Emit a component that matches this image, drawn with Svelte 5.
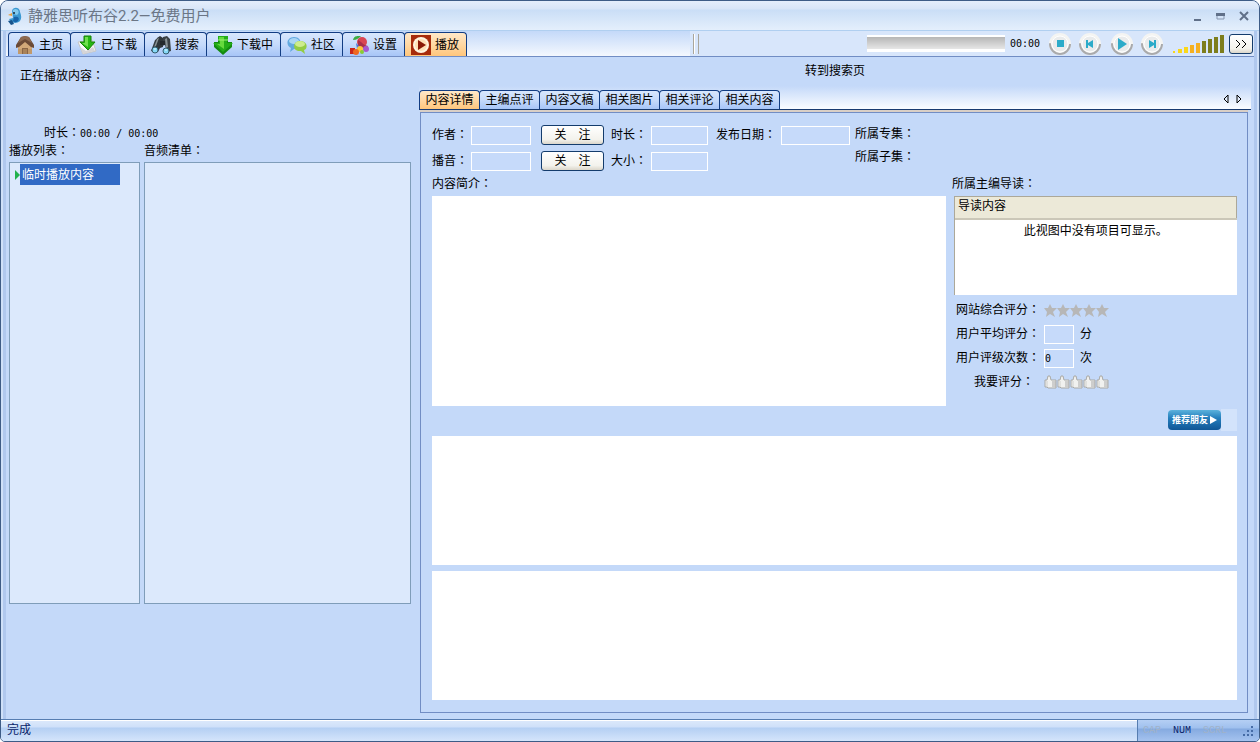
<script lang="ts">
    const mainTabs = [
        { id: "home", label: "主页" },
        { id: "done", label: "已下载" },
        { id: "search", label: "搜索" },
        { id: "down", label: "下载中" },
        { id: "chat", label: "社区" },
        { id: "settings", label: "设置" },
        { id: "play", label: "播放" },
    ];
    const detailTabs = ["内容详情", "主编点评", "内容文稿", "相关图片", "相关评论", "相关内容"];
    const bars = [2, 4, 6, 8, 10, 12, 14, 16, 18];

    let mainTab = $state("play");
    let detailTab = $state("内容详情");
    let volume = $state(4);
</script>

{#snippet colon()}<span class="colon">：</span>{/snippet}

{#snippet icon(id: string)}
    <svg class="icon" width="20" height="20" viewBox="0 0 20 20" aria-hidden="true">
        {#if id === "home"}
            <path d="M3 10 10 5l7 5v9H3z" fill="#d2a878" />
            <path d="M3 14h14v5H3z" fill="#c29a6c" />
            <path d="M1 10 6 2l4-1 4 1 5 8v3l-3-1-6-5-6 5-3 1z" fill="#6b4a36" />
            <path d="m6 2 4-1 4 1 3 6-7-4-7 4z" fill="#8d6a50" />
            <path d="M7 13h6v6H7z" fill="#8a6545" />
            <path d="M8 14h4v5H8z" fill="#a98258" />
        {:else if id === "done"}
            <path d="m1 7 14-2 4 11-13 3z" fill="#f8f8f8" stroke="#c5c5c5" />
            <path d="m3 12 3 7 12-3-2-4-7 4z" fill="#d5d5d8" />
            <path d="M7 1h7v6h4l-7 8-8-8h4z" fill="#27b814" stroke="#168209" />
            <path d="M8 2h3v10L5 8h3z" fill="#70e04d" />
        {:else if id === "search"}
            <path d="m4 5 3-2 2 1-3 9-3 4-3-1zM12 2l4-1 3 3 1 12-4 1-2-7-3 1z" fill="#3a4145" />
            <path d="m6 3 3-2 3 2v9l-3 1-2 4-6-1z" fill="#30373a" />
            <path d="m6 4 2-1-3 8-2 1zM14 4l2-1 1 9-2 1z" fill="#899295" />
            <path d="M9 6h5v4H9z" fill="#24292d" />
            <circle cx="4" cy="15" r="3" fill="#86d8f6" stroke="#325b6b" />
            <circle cx="15" cy="16" r="3" fill="#86d8f6" stroke="#325b6b" />
            <path d="M3 14h2M14 15h2" stroke="#e6fbff" />
        {:else if id === "down"}
            <path d="M5 1h10v6h4v5l-9 8-9-8V7h4z" fill="#148c10" />
            <path d="M5 1h10v4h-1v3h6l-10 9L0 8h6V5H5z" fill="#25ad18" />
            <path d="M6 2h5v12L4 9h3V5H6z" fill="#66da3d" />
            <path d="M5 5h10" stroke="#a1ef76" />
        {:else if id === "chat"}
            <path d="M7 2c9 0 9 12 0 12l-4 3 1-4C-2 10 0 2 7 2z" fill="#63a9df" />
            <ellipse cx="7" cy="6" rx="5" ry="3" fill="#a9d5f4" />
            <path d="M13 6c8 0 8 8 4 9l1 4-4-3C5 17 5 6 13 6z" fill="#93cc43" />
            <ellipse cx="13" cy="9" rx="5" ry="3" fill="#cdec8d" />
        {:else if id === "settings"}
            <path d="M4 5c1-5 5-4 8-4-2 2-4 4-8 4z" fill="#3cac43" />
            <circle cx="13" cy="7" r="5" fill="#d94653" />
            <path d="M9 5c4 2 5 5 10 6l-2 3-8-3z" fill="#a92f4b" />
            <path d="m7 8 5 5-4 1z" fill="#4679da" />
            <circle cx="17" cy="14" r="3" fill="#a658d0" />
            <path d="M1 13h5v6H1z" fill="#c9251c" />
            <circle cx="11" cy="14" r="3" fill="#ffc43a" />
            <circle cx="7" cy="17" r="3" fill="#ef6721" />
            <circle cx="13" cy="17" r="2" fill="#8acc36" />
        {:else}
            <path d="M0 0h20v20H0z" fill="#a72b0b" />
            <circle cx="10" cy="10" r="8" fill="#fff4df" />
            <circle cx="10" cy="10" r="6" fill="#ffe0b5" />
            <path d="m7 5 8 5-8 5z" fill="#8a1906" />
        {/if}
    </svg>
{/snippet}

{#snippet player(label: string, d: string)}
    <button class="round" aria-label={label}>
        <svg width="24" height="24" viewBox="0 0 24 24">
            <circle cx="12" cy="12" r="11" fill="#f4f4f2" />
            <circle cx="12" cy="12" r="10" fill="none" stroke="#a9aaac" stroke-width="2" stroke-dasharray="32 31" />
            <circle cx="12" cy="12" r="8" fill="#e9ebec" stroke="#fff" />
            <path {d} fill="#2cabc9" />
        </svg>
    </button>
{/snippet}

<div class="window">
    <header class="titlebar">
        <svg width="16" height="18" viewBox="0 0 16 18" aria-hidden="true">
            <path d="M5 4c1-5 8-4 8 1 3 7 0 11-5 11l-4-1-2-3 4-1z" fill="#3b98d1" />
            <path d="M6 3c4-3 8 2 4 5L6 7z" fill="#82c9ed" />
            <path d="M5 6 1 8l4 1z" fill="#e9a03a" />
            <circle cx="7" cy="6" r="1" fill="#123" />
            <path d="M7 10c4-1 6 1 4 4-2 2-4 1-5 0z" fill="#1763a8" />
            <path d="m1 14 4-1 2 4-3 1z" fill="#17548c" />
        </svg>
        <h1>静雅思听布谷2.2—免费用户</h1>
        <div class="winbuttons">
            <button aria-label="最小化"><svg width="14" height="12"><path d="M3 9h7v2H3z" fill="#607089" /></svg></button>
            <button aria-label="最大化"><svg width="14" height="12"><path d="M3 4h7v5H3z" fill="none" stroke="#8897b0" /><path d="M2 3h9v3H2z" fill="#607089" /></svg></button>
            <button aria-label="关闭"><svg width="14" height="12"><path d="m3 2 8 8M11 2l-8 8" stroke="#607089" stroke-width="2" /></svg></button>
        </div>
    </header>

    <div class="frame">
        <div class="toolbar">
            <nav class="maintabs">
                {#each mainTabs as tab}
                    <button class="tab" class:active={mainTab === tab.id} onclick={() => (mainTab = tab.id)}>
                        {@render icon(tab.id)}
                        <span>{tab.label}</span>
                    </button>
                {/each}
            </nav>
            <div class="grip"></div>
            <div class="controls">
                <progress value="0" max="100" aria-label="播放进度"></progress>
                <span class="num">00:00</span>
                <div class="pair">
                    {@render player("停止", "M9 8h7v7H9z")}
                    {@render player("上一个", "M8 8h2v3l5-3v8l-5-3v3H8z")}
                </div>
                <div class="pair">
                    {@render player("播放", "m8 6 9 6-9 6z")}
                    {@render player("下一个", "M16 8h-2v3L9 8v8l5-3v3h2z")}
                </div>
                <label class="volume">
                    <svg width="52" height="20" aria-hidden="true">
                        {#each bars as h, i}
                            <rect x={i * 6 - (i ? 1 : 0)} y={19 - h} width={i ? 4 : 2} height={h} fill={i > volume ? "#7d7d1c" : i > 2 ? "#f5b021" : "#f9d71c"} />
                        {/each}
                    </svg>
                    <input type="range" min="0" max="8" bind:value={volume} aria-label="音量" />
                </label>
                <button class="push more" aria-label="更多">
                    <svg width="12" height="10"><path d="m1 1 4 4-4 4M7 1l4 4-4 4" fill="none" stroke="#000" /></svg>
                </button>
            </div>
        </div>

        <main>
            <section class="left">
                <p class="now">正在播放内容{@render colon()}</p>
                <p class="time">时长{@render colon()}<span class="num">00:00 / 00:00</span></p>
                <div class="lists">
                    <div class="listcol">
                        <h2>播放列表{@render colon()}</h2>
                        <ul>
                            <li>
                                <svg width="6" height="10"><path d="M1 0v10l5-5z" fill="#22b14c" /></svg>
                                <button class="selected">临时播放内容</button>
                            </li>
                        </ul>
                    </div>
                    <div class="listcol">
                        <h2>音频清单{@render colon()}</h2>
                        <ul></ul>
                    </div>
                </div>
            </section>

            <section class="right">
                <a class="goto" href="#search">转到搜索页</a>
                <nav class="detailtabs">
                    {#each detailTabs as tab}
                        <button class="tab" class:active={detailTab === tab} onclick={() => (detailTab = tab)}>{tab}</button>
                    {/each}
                    <div class="arrows">
                        <button aria-label="向左"><svg width="6" height="11"><path d="M5 1v8L1 5z" fill="none" stroke="#000" /></svg></button>
                        <button aria-label="向右"><svg width="6" height="11"><path d="M1 1v8l4-4z" fill="none" stroke="#000" /></svg></button>
                    </div>
                </nav>

                <div class="panel">
                    <div class="meta">
                        <div class="fields">
                            <label for="author">作者{@render colon()}</label>
                            <input id="author" type="text" />
                            <button class="push">关　注</button>
                            <label for="length">时长{@render colon()}</label>
                            <input id="length" type="text" />
                            <label for="date">发布日期{@render colon()}</label>
                            <input id="date" type="text" />
                            <label for="reader">播音{@render colon()}</label>
                            <input id="reader" type="text" />
                            <button class="push">关　注</button>
                            <label for="size">大小{@render colon()}</label>
                            <input id="size" type="text" />
                        </div>
                        <div class="belongs">
                            <span>所属专集{@render colon()}</span>
                            <span>所属子集{@render colon()}</span>
                        </div>
                    </div>

                    <div class="info">
                        <div class="intro">
                            <label for="intro">内容简介{@render colon()}</label>
                            <textarea id="intro" readonly></textarea>
                        </div>
                        <div class="side">
                            <h3>所属主编导读{@render colon()}</h3>
                            <div class="guide">
                                <table>
                                    <thead><tr><th>导读内容</th></tr></thead>
                                    <tbody><tr><td>此视图中没有项目可显示。</td></tr></tbody>
                                </table>
                            </div>
                            <div class="ratings">
                                <span>网站综合评分{@render colon()}</span>
                                <div class="row">
                                    <svg width="65" height="13" viewBox="0 0 65 13" role="img" aria-label="评分">
                                        {#each [0, 13, 26, 39, 52] as x}
                                            <path d="M{x + 6} 0l2 4h5l-4 4 2 5-5-3-4 3 1-5-3-4h4z" fill="#b7b7b7" />
                                        {/each}
                                    </svg>
                                </div>
                                <label for="avg">用户平均评分{@render colon()}</label>
                                <div class="row"><input id="avg" type="text" /><span>分</span></div>
                                <label for="count">用户评级次数{@render colon()}</label>
                                <div class="row"><input id="count" type="text" value="0" /><span>次</span></div>
                                <span class="mine">我要评分{@render colon()}</span>
                                <div class="thumbs">
                                    {#each [1, 2, 3, 4, 5] as n}
                                        <button aria-label="{n}分">
                                            <svg width="13" height="14" viewBox="0 0 13 14">
                                                <path d="M1 5h2l1-4h2l1 4h5v8H4l-1-1H1z" fill="#f1f1ef" stroke="#a9a9a6" />
                                                <path d="M8 7h4M8 9h4M8 11h4" stroke="#aaa" />
                                                <path d="M3 6v6" stroke="#cfcfcc" />
                                            </svg>
                                        </button>
                                    {/each}
                                </div>
                            </div>
                        </div>
                    </div>

                    <div class="share">
                        <button>推荐朋友<svg width="7" height="8"><path d="M0 0v8l7-4z" fill="#fff" /></svg></button>
                    </div>
                    <div class="view"></div>
                    <div class="view"></div>
                </div>
            </section>
        </main>
    </div>

    <footer>
        <span class="message">完成</span>
        <div class="keys">
            <span class="off">CAP</span>
            <span>NUM</span>
            <span class="off">SCRL</span>
            <svg width="12" height="12" aria-hidden="true">
                <path d="M9 1h2v2H9zM5 5h2v2H5zM9 5h2v2H9zM1 9h2v2H1zM5 9h2v2H5zM9 9h2v2H9z" fill="#456ba5" />
            </svg>
        </div>
    </footer>
</div>

<style>
    :global(body) {
        background: #fff;
    }

    .window {
        box-sizing: border-box;
        min-height: 100vh;
        display: flex;
        flex-direction: column;
        border: 1px solid #3e5c86;
        border-radius: 8px 8px 5px 5px;
        overflow: hidden;
        background: #c4d9f9;
        color: #000;
        font: 12px/14px "Liberation Sans", "Noto Sans CJK SC", sans-serif;
    }

    .window * {
        box-sizing: border-box;
    }

    button, input, textarea {
        font: inherit;
        color: inherit;
        margin: 0;
        padding: 0;
    }

    button {
        border: 0;
        background: none;
        white-space: nowrap;
    }

    svg {
        display: block;
        flex: none;
    }

    h1, h2, h3, p, ul {
        margin: 0;
        padding: 0;
        font-size: 12px;
        font-weight: normal;
        list-style: none;
    }

    .colon {
        font-family: "Noto Sans CJK TC", sans-serif;
        line-height: 0;
    }

    .num {
        font-family: "DejaVu Sans Mono", monospace;
        font-size: 10px;
        line-height: 10px;
    }

    .titlebar {
        display: flex;
        align-items: center;
        gap: 5px;
        height: 30px;
        padding: 0 8px 0 6px;
        border-bottom: 1px solid #b0cff0;
        background: linear-gradient(#e5eefb, #d8e5f7 8px, #cadef6 9px, #e4effc);
    }

    .titlebar h1 {
        flex: 1;
        font: 15px/20px Roboto, "Noto Sans CJK SC", sans-serif;
        color: #6b7686;
    }

    .winbuttons {
        display: flex;
        gap: 9px;
    }

    .frame {
        flex: 1;
        display: flex;
        flex-direction: column;
        padding: 0 3px;
        border: solid #cfe0f8;
        border-width: 0 2px;
        box-shadow: inset 3px 0 #b0c8ee, inset -3px 0 #b0c8ee;
    }

    .toolbar {
        display: flex;
        align-items: center;
        height: 26px;
        border-bottom: 1px solid #718dc4;
        background: #d8e6fb;
    }

    .maintabs {
        flex: 1;
        display: flex;
        align-self: stretch;
        padding: 1px 0 0 2px;
        background: linear-gradient(#c4d9f9, #f4f8fe);
    }

    .tab {
        border: 1px solid #123d83;
        border-bottom: 0;
        border-radius: 4px 4px 0 0;
        background: linear-gradient(#d8e7fd, #c5dafb 50%, #a7c5f7);
    }

    .tab + .tab {
        margin-left: -1px;
    }

    .tab.active {
        background: linear-gradient(#ffe8c8, #ffd8a4 50%, #ffc67c);
    }

    .maintabs .tab {
        display: flex;
        align-items: center;
        gap: 4px;
        padding: 1px 7px 0 6px;
    }

    .grip {
        width: 6px;
        height: 20px;
        margin: 0 3px;
        border: solid #aaa69b;
        border-width: 0 1px;
        background: linear-gradient(90deg, #fff 1px, #d8e6fb 1px);
    }

    .controls {
        flex: 0 0 552px;
        display: flex;
        align-items: center;
        justify-content: flex-end;
        padding-right: 1px;
    }

    progress {
        appearance: none;
        width: 138px;
        height: 17px;
        margin-right: 5px;
        border: 0;
        background: linear-gradient(#fff 2px, #b6b6b6 2px, #e6e6e6 14px, #fff 14px);
    }

    progress::-webkit-progress-bar {
        background: none;
    }

    .pair {
        display: flex;
        gap: 6px;
        margin-left: 8px;
    }

    .volume {
        position: relative;
        margin: 0 4px 0 9px;
    }

    .volume input {
        position: absolute;
        inset: 0;
        width: 100%;
        opacity: 0;
    }

    .push {
        height: 20px;
        border: 1px solid #143c6c;
        border-radius: 3px;
        background: linear-gradient(#fff, #f3f2ec 75%, #dbd6ca);
    }

    .more {
        width: 24px;
        display: grid;
        place-items: center;
    }

    main {
        flex: 1;
        display: grid;
        grid-template-columns: 413fr 835fr;
    }

    .left {
        padding: 12px 8px 0 3px;
    }

    .now {
        padding-left: 11px;
    }

    .time {
        margin-top: 43px;
        padding-left: 35px;
    }

    .lists {
        display: grid;
        grid-template-columns: 131fr 267fr;
        gap: 4px;
        margin-top: 4px;
    }

    .listcol h2 {
        margin-bottom: 4px;
    }

    .listcol ul {
        height: 442px;
        border: 1px solid #7f9db9;
        background: #dce9fc;
    }

    .listcol li {
        display: flex;
        align-items: center;
        padding: 1px 0 0 4px;
    }

    .selected {
        width: 100px;
        height: 21px;
        padding: 0 2px;
        text-align: left;
        color: #fff;
        background: #316ac5;
    }

    .right {
        display: flex;
        flex-direction: column;
        min-width: 0;
        padding-right: 3px;
    }

    .goto {
        align-self: center;
        margin: 7px 0 8px;
        color: #000;
        text-decoration: none;
    }

    .detailtabs {
        display: flex;
        height: 24px;
        padding-top: 4px;
        border-bottom: 1px solid #173a70;
        background: linear-gradient(#c4d9f9, #fafcff);
    }

    .detailtabs .tab {
        flex: none;
        width: 61px;
        padding-bottom: 1px;
    }

    .arrows {
        display: flex;
        gap: 7px;
        margin: 0 9px 0 auto;
    }

    .panel {
        flex: 1;
        display: flex;
        flex-direction: column;
        margin: 2px 3px 6px 1px;
        padding: 12px 10px 12px 11px;
        border: 1px solid #718dc4;
        box-shadow: 0 -2px #d9cfc6;
    }

    .meta {
        display: flex;
        gap: 5px;
    }

    .fields {
        display: grid;
        grid-template-columns: 39px 60px 80px 40px 57px 73px 69px;
        grid-auto-rows: 20px;
        row-gap: 6px;
        align-items: center;
    }

    .fields .push {
        width: 63px;
        margin-left: 10px;
    }

    .fields label[for="date"] {
        padding-left: 8px;
    }

    input[type="text"] {
        width: 100%;
        height: 19px;
        border: 1px solid #fff;
        background: #c6dafa;
    }

    .belongs {
        display: flex;
        flex-direction: column;
        gap: 5px;
        line-height: 18px;
    }

    .info {
        display: grid;
        grid-template-columns: 514fr 285fr;
        gap: 6px;
        margin-top: 6px;
    }

    .intro {
        display: flex;
        flex-direction: column;
        gap: 5px;
    }

    textarea {
        flex: 1;
        border: 0;
        resize: none;
        background: #fff;
    }

    .guide {
        height: 99px;
        margin: 5px 0 3px 2px;
        border: solid #aca899;
        border-width: 1px 0 0 1px;
        background: #fff;
    }

    table {
        width: 100%;
        border-collapse: collapse;
    }

    th {
        height: 22px;
        padding: 0 3px 4px;
        border-right: 1px solid #aca899;
        border-bottom: 2px solid #cbc7b8;
        background: #ece9d8;
        font-weight: normal;
        text-align: left;
    }

    td {
        padding: 4px 0;
        text-align: center;
    }

    .ratings {
        display: grid;
        grid-template-columns: 84px 1fr;
        grid-auto-rows: 24px;
        column-gap: 4px;
        align-items: center;
        height: 108px;
        padding-left: 4px;
        white-space: nowrap;
    }

    .row {
        display: flex;
        align-items: center;
        gap: 6px;
    }

    .row input[type="text"] {
        width: 30px;
        font-family: "DejaVu Sans Mono", monospace;
        font-size: 10px;
    }

    .mine {
        padding-left: 18px;
    }

    .thumbs {
        display: flex;
    }

    .share {
        display: flex;
        justify-content: flex-end;
        align-items: center;
        height: 22px;
        margin: 3px 0 5px;
    }

    .share::after {
        content: "";
        width: 16px;
        height: 22px;
        background: #d3e3fb;
    }

    .share button {
        display: flex;
        align-items: center;
        justify-content: center;
        gap: 2px;
        width: 53px;
        height: 20px;
        border-radius: 4px;
        background: linear-gradient(#5bb2dc, #257fbd 40%, #105696);
        color: #fff;
        font-size: 9px;
        font-weight: bold;
    }

    .view {
        flex: 1 0 128px;
        background: #fff;
    }

    .view + .view {
        margin-top: 6px;
    }

    footer {
        display: flex;
        height: 22px;
        border-top: 1px solid #567db1;
        color: #0a246a;
    }

    .message {
        flex: 1;
        padding: 2px 6px;
        border-top: 1px solid #fff;
        background: linear-gradient(#dbe8fb, #cfe0f9 6px, #b4cff3 7px, #d5e5fb);
    }

    .keys {
        display: flex;
        align-items: center;
        gap: 12px;
        width: 122px;
        padding: 0 5px;
        border-left: 1px solid #567db1;
        background: linear-gradient(#b5cff4, #9fc0ee 8px, #85aae0 9px, #a5c3ef);
        font: 10px/14px "Liberation Mono", monospace;
    }

    .keys svg {
        margin-left: auto;
    }

    .off {
        color: #a0b2c8;
    }
</style>
